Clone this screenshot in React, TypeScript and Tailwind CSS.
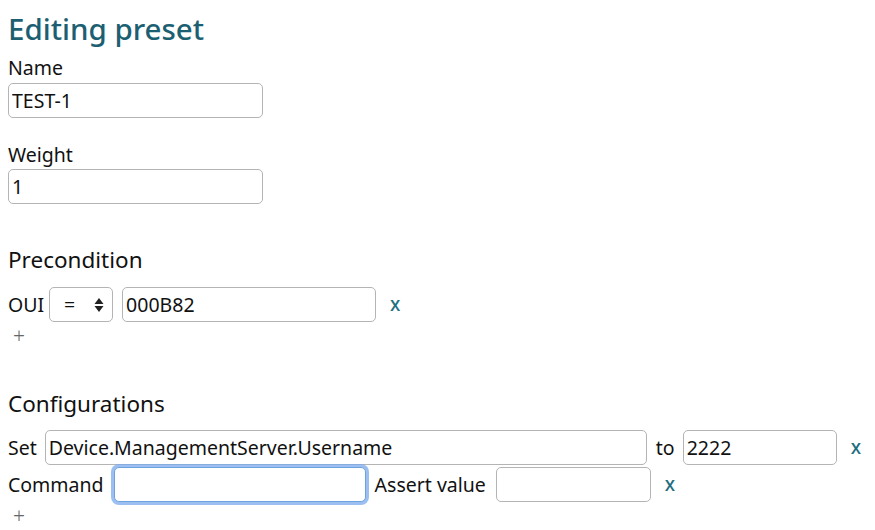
const font = { fontFamily: '"Noto Sans", "Open Sans", sans-serif' };

function Field({ className = '', value = '', focused = false }: { className?: string; value?: string; focused?: boolean }) {
  return (
    <input
      readOnly
      value={value}
      className={
        'h-[35px] rounded-[5px] border bg-white px-[3px] text-[19.5px] text-[#111] outline-none ' +
        (focused
          ? 'border-[#6fa3e0] shadow-[0_0_0_3px_rgba(120,170,235,0.75)]'
          : 'border-[#b4b4b4]') +
        ' ' +
        className
      }
    />
  );
}

function Remove() {
  return <span className="px-[14px] text-[19px] font-medium text-[#1f6e80]">x</span>;
}

function Plus() {
  return <div className="mt-[4px] ml-[5px] text-[21px] leading-[20px] font-light text-[#666]">+</div>;
}

export default function App() {
  return (
    <div style={font} className="w-[875px] bg-white pl-[8px] text-[19.5px] text-[#111]">
      <h1 className="pt-[9px] text-[29.5px] leading-[40px] font-medium text-[#1d5f72]">Editing preset</h1>

      <div className="mt-[8px] leading-[22px]">Name</div>
      <Field className="mt-[4px] w-[255px]" value="TEST-1" />

      <div className="mt-[26px] leading-[22px]">Weight</div>
      <Field className="mt-[3px] w-[255px]" value="1" />

      <h2 className="mt-[41px] text-[22.5px] leading-[30px]">Precondition</h2>
      <div className="mt-[12px] flex items-center">
        <span>OUI</span>
        <div className="ml-[5px] flex h-[35px] w-[64px] items-center justify-between rounded-[5px] border border-[#b4b4b4] pr-[8px] pl-[14px]">
          <span>=</span>
          <svg width="10" height="16" viewBox="0 0 10 16" className="fill-[#222]">
            <path d="M5 1 L9.5 7 H0.5 Z" />
            <path d="M5 15 L9.5 9 H0.5 Z" />
          </svg>
        </div>
        <Field className="ml-[9px] w-[254px]" value="000B82" />
        <Remove />
      </div>
      <Plus />

      <h2 className="mt-[43px] text-[22.5px] leading-[30px]">Configurations</h2>
      <div className="mt-[11px] flex items-center">
        <span>Set</span>
        <Field className="ml-[8px] w-[604px]" value="Device.ManagementServer.Username" />
        <span className="ml-[9px]">to</span>
        <Field className="ml-[8px] w-[154px]" value="2222" />
        <Remove />
      </div>
      <div className="mt-[2px] flex items-center">
        <span>Command</span>
        <Field className="ml-[10px] w-[252px]" focused />
        <span className="ml-[9px]">Assert value</span>
        <Field className="ml-[10px] w-[155px]" />
        <Remove />
      </div>
      <Plus />
    </div>
  );
}
